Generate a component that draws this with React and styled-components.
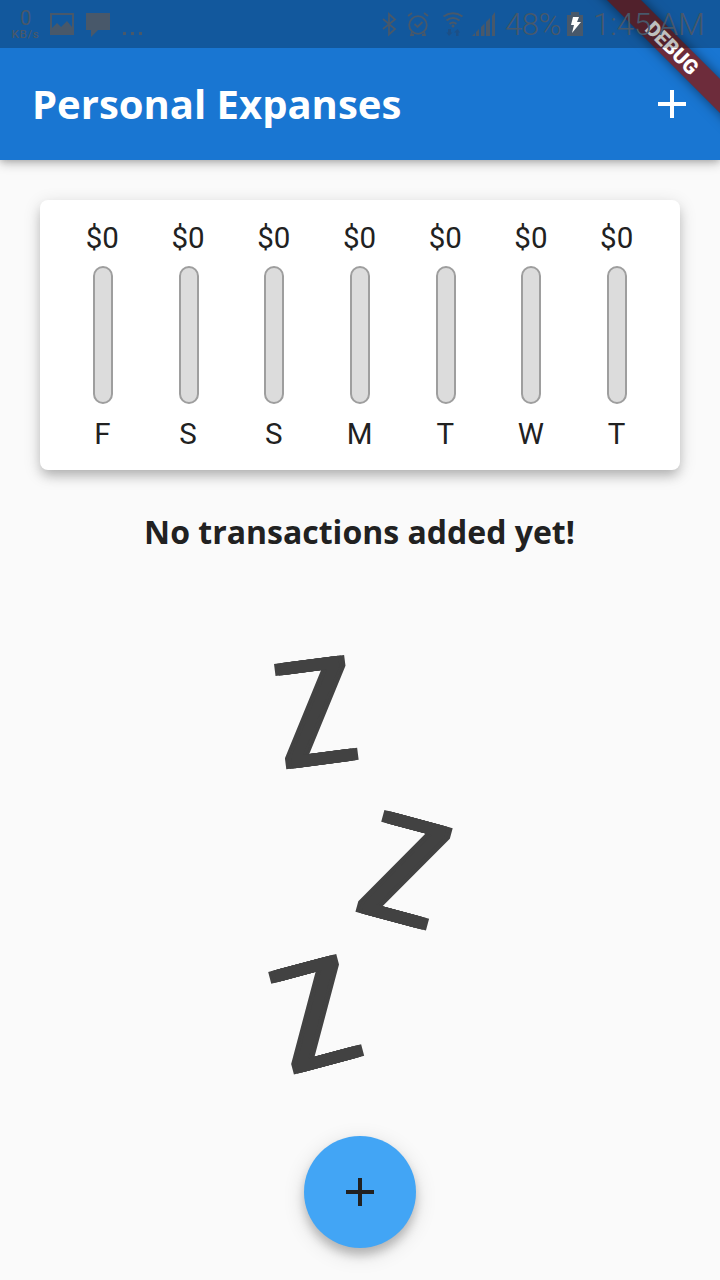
import React from 'react'
import styled, { createGlobalStyle } from 'styled-components'

const days = [
  { label: 'F', amount: 0 },
  { label: 'S', amount: 0 },
  { label: 'S', amount: 0 },
  { label: 'M', amount: 0 },
  { label: 'T', amount: 0 },
  { label: 'W', amount: 0 },
  { label: 'T', amount: 0 },
]

function StatusIcons() {
  return (
    <StatusBar>
      <NetSpeed>
        <b>0</b>
        <span>KB/s</span>
      </NetSpeed>
      <StatusIcon $left={10} width="24" height="24" viewBox="0 0 24 24">
        <path fillRule="evenodd" d="M0 1h24v22H0zM2 3v13l5-5 4 4 6-6 5 6V3z" />
      </StatusIcon>
      <StatusIcon $left={12} width="24" height="26" viewBox="0 0 24 26">
        <path d="M0 2h24v17H12l-7 7v-7H0z" />
      </StatusIcon>
      <Dots>
        <i />
        <i />
        <i />
      </Dots>
      <StatusRight>
        <StatusIcon width="16" height="26" viewBox="0 0 16 26">
          <path fill="none" stroke="currentColor" strokeWidth="1.8" d="M1 8l12 10-6 5.500V3l6 5.500L1 18" />
        </StatusIcon>
        <StatusIcon $left={9} width="22" height="26" viewBox="0 0 22 26">
          <g fill="none" stroke="currentColor" strokeWidth="1.8">
            <circle cx="11" cy="14" r="8.8" />
            <path d="M7.500 13l3 3 5-5M1 5l4-3M21 5l-4-3M5 21l-1 3h3M17 21l1 3h-3" />
          </g>
        </StatusIcon>
        <StatusIcon $left={13} width="22" height="26" viewBox="0 0 22 26">
          <g fill="none" stroke="currentColor" strokeWidth="2">
            <path d="M1.500 5.500q9.500-6.500 19 0M4.500 9.500q6.500-5 13 0M7.500 13q3.500-3 7 0" />
          </g>
          <circle cx="11" cy="15" r="1.500" />
          <path fill="#1c4f86" d="M6 18h3v3.500h1.500L7 25l-2.500-3.500H6zM14 25v-3.500h-2l3.500-3.500 2.500 3.500h-1.500V25z" />
        </StatusIcon>
        <StatusIcon $left={8} width="24" height="26" viewBox="0 0 24 26">
          <path d="M0 25l3-3v3zM4 21l3-3v7H4zM9 16l3.500-3.500V25H9zM14 11l4-4v18h-4zM20 5l3-4v24h-3z" />
        </StatusIcon>
        <Battery>48%</Battery>
        <StatusIcon $left={6} width="16" height="26" viewBox="0 0 16 26">
          <path d="M0 4h4V1h8v3h4v21H0z" />
          <path fill="#fff" d="M6 6h6l-2 5h4L5 22l2-8H4z" />
        </StatusIcon>
        <Clock>1:45 AM</Clock>
      </StatusRight>
    </StatusBar>
  )
}

function ChartBar({ label, amount }) {
  return (
    <Day>
      <DayText>${amount}</DayText>
      <Bar />
      <DayText>{label}</DayText>
    </Day>
  )
}

function PlusIcon() {
  return (
    <svg width="28" height="28" viewBox="0 0 28 28">
      <path fill="currentColor" d="M12 0h4v12h12v4H16v12h-4V16H0v-4h12z" />
    </svg>
  )
}

function App() {
  return (
    <Screen>
      <GlobalStyle />
      <Ribbon>DEBUG</Ribbon>
      <StatusIcons />
      <AppBar>
        <Title>Personal Expanses</Title>
        <AddButton aria-label="Add">
          <PlusIcon />
        </AddButton>
      </AppBar>
      <Chart>
        {days.map((day, i) => (
          <ChartBar key={i} label={day.label} amount={day.amount} />
        ))}
      </Chart>
      <Empty>No transactions added yet!</Empty>
      <Sleeping>
        <Zed $angle={-7.6} $left={279.8} $gap={52}><span>Z</span></Zed>
        <Zed $angle={15} $left={369} $gap={38.8}><span>Z</span></Zed>
        <Zed $angle={-15} $left={279.5}><span>Z</span></Zed>
      </Sleeping>
      <Fab aria-label="Add transaction">
        <PlusIcon />
      </Fab>
    </Screen>
  )
}

export default App

const GlobalStyle = createGlobalStyle`
  * {
    box-sizing: border-box;
  }

  body {
    margin: 0;
    background: #fafafa;
  }
`

const Screen = styled.div`
  position: relative;
  display: flex;
  flex-direction: column;
  width: 720px;
  height: 1280px;
  overflow: hidden;
  background: #fafafa;
  color: #212121;
  font-family: Roboto, sans-serif;
`

const StatusBar = styled.div`
  position: relative;
  z-index: 3;
  display: flex;
  align-items: center;
  flex: none;
  height: 48px;
  padding: 0 16px 0 11px;
  background: rgba(0, 0, 0, 0.25);
  color: #48586a;
`

const NetSpeed = styled.div`
  display: flex;
  flex-direction: column;
  align-items: center;
  width: 29px;

  b {
    font-size: 20px;
    font-weight: 400;
    line-height: 19px;
  }

  span {
    font-size: 11.5px;
    font-weight: 500;
    letter-spacing: 0.8px;
    line-height: 12px;
  }
`

const StatusIcon = styled.svg`
  flex: none;
  margin-left: ${(props) => props.$left || 0}px;
  fill: currentColor;
`

const Dots = styled.div`
  display: flex;
  gap: 5px;
  margin: 18px 0 0 13px;

  i {
    width: 3px;
    height: 3px;
    background: currentColor;
  }
`

const StatusRight = styled.div`
  display: flex;
  align-items: center;
  margin-left: auto;
`

const Battery = styled.span`
  width: 56px;
  margin-left: 9px;
  padding-top: 2px;
  font-size: 31px;
  font-weight: 300;
  letter-spacing: -0.5px;
  line-height: 48px;
  white-space: nowrap;
`

const Clock = styled.span`
  width: 111px;
  margin-left: 10px;
  padding-top: 2px;
  font-size: 31px;
  font-weight: 300;
  line-height: 48px;
  white-space: nowrap;
`

const Ribbon = styled.div`
  position: absolute;
  z-index: 2;
  top: 35.5px;
  left: 572px;
  width: 200px;
  height: 24px;
  background: rgba(121, 34, 38, 0.88);
  box-shadow: 0 0 12px rgba(0, 0, 0, 0.5);
  color: #fff;
  font-size: 20.4px;
  font-weight: 900;
  line-height: 24px;
  text-align: center;
  transform: rotate(45deg);
`

const AppBar = styled.header`
  display: flex;
  align-items: center;
  justify-content: space-between;
  flex: none;
  height: 160px;
  margin-top: -48px;
  padding: 48px 34px 0 32px;
  background: #1976d2;
  box-shadow: 0 4px 10px rgba(0, 0, 0, 0.22), 0 1px 6px rgba(0, 0, 0, 0.16);
`

const Title = styled.h1`
  margin: 0;
  color: #fff;
  font-family: 'Open Sans', sans-serif;
  font-size: 40px;
  font-weight: 700;
  line-height: 54px;
`

const AddButton = styled.button`
  display: flex;
  padding: 0;
  border: none;
  background: none;
  color: #fff;
`

const Chart = styled.section`
  display: flex;
  flex: none;
  height: 270px;
  margin: 40px 40px 0;
  padding: 20px 20px 18px;
  border-radius: 8px;
  background: #fff;
  box-shadow: 0 7px 12px -2px rgba(0, 0, 0, 0.22), 0 4px 18px rgba(0, 0, 0, 0.14);
`

const Day = styled.div`
  display: flex;
  flex: 1;
  flex-direction: column;
  align-items: center;
`

const DayText = styled.span`
  margin-right: 1px;
  font-size: 29.5px;
  line-height: 36px;
`

const Bar = styled.div`
  flex: none;
  width: 20px;
  height: 138px;
  margin: 10px 0 12px;
  border: 2px solid #9e9e9e;
  border-radius: 10px;
  background: #dcdcdc;
`

const Empty = styled.h2`
  margin: 40px 1px 0 0;
  font-family: 'Open Sans', sans-serif;
  font-size: 32px;
  font-weight: 700;
  line-height: 44px;
  text-align: center;
`

const Sleeping = styled.div`
  display: flex;
  flex-direction: column;
  padding-top: 104.5px;
`

const Zed = styled.div`
  display: flex;
  align-items: center;
  justify-content: center;
  width: 71px;
  height: 106px;
  margin: 0 0 ${(props) => props.$gap || 0}px ${(props) => props.$left}px;
  color: #424242;
  transform: rotate(${(props) => props.$angle}deg);

  /* shadows widen the diagonal but leave the bars thin */
  span {
    font-family: 'DejaVu Sans', sans-serif;
    font-size: 145px;
    line-height: 106px;
    text-shadow: 4px 0 #424242, 8.5px 0 #424242, -4px 0 #424242, -8.5px 0 #424242;
    transform: translateY(2.9px) skewX(-0.3deg) scaleX(0.705);
  }
`

const Fab = styled.button`
  position: absolute;
  bottom: 32px;
  left: 304px;
  display: flex;
  align-items: center;
  justify-content: center;
  width: 112px;
  height: 112px;
  padding: 0;
  border: none;
  border-radius: 50%;
  background: #42a5f5;
  box-shadow: 0 7px 10px rgba(0, 0, 0, 0.2), 0 6px 22px rgba(0, 0, 0, 0.14);
  color: #212121;
`
